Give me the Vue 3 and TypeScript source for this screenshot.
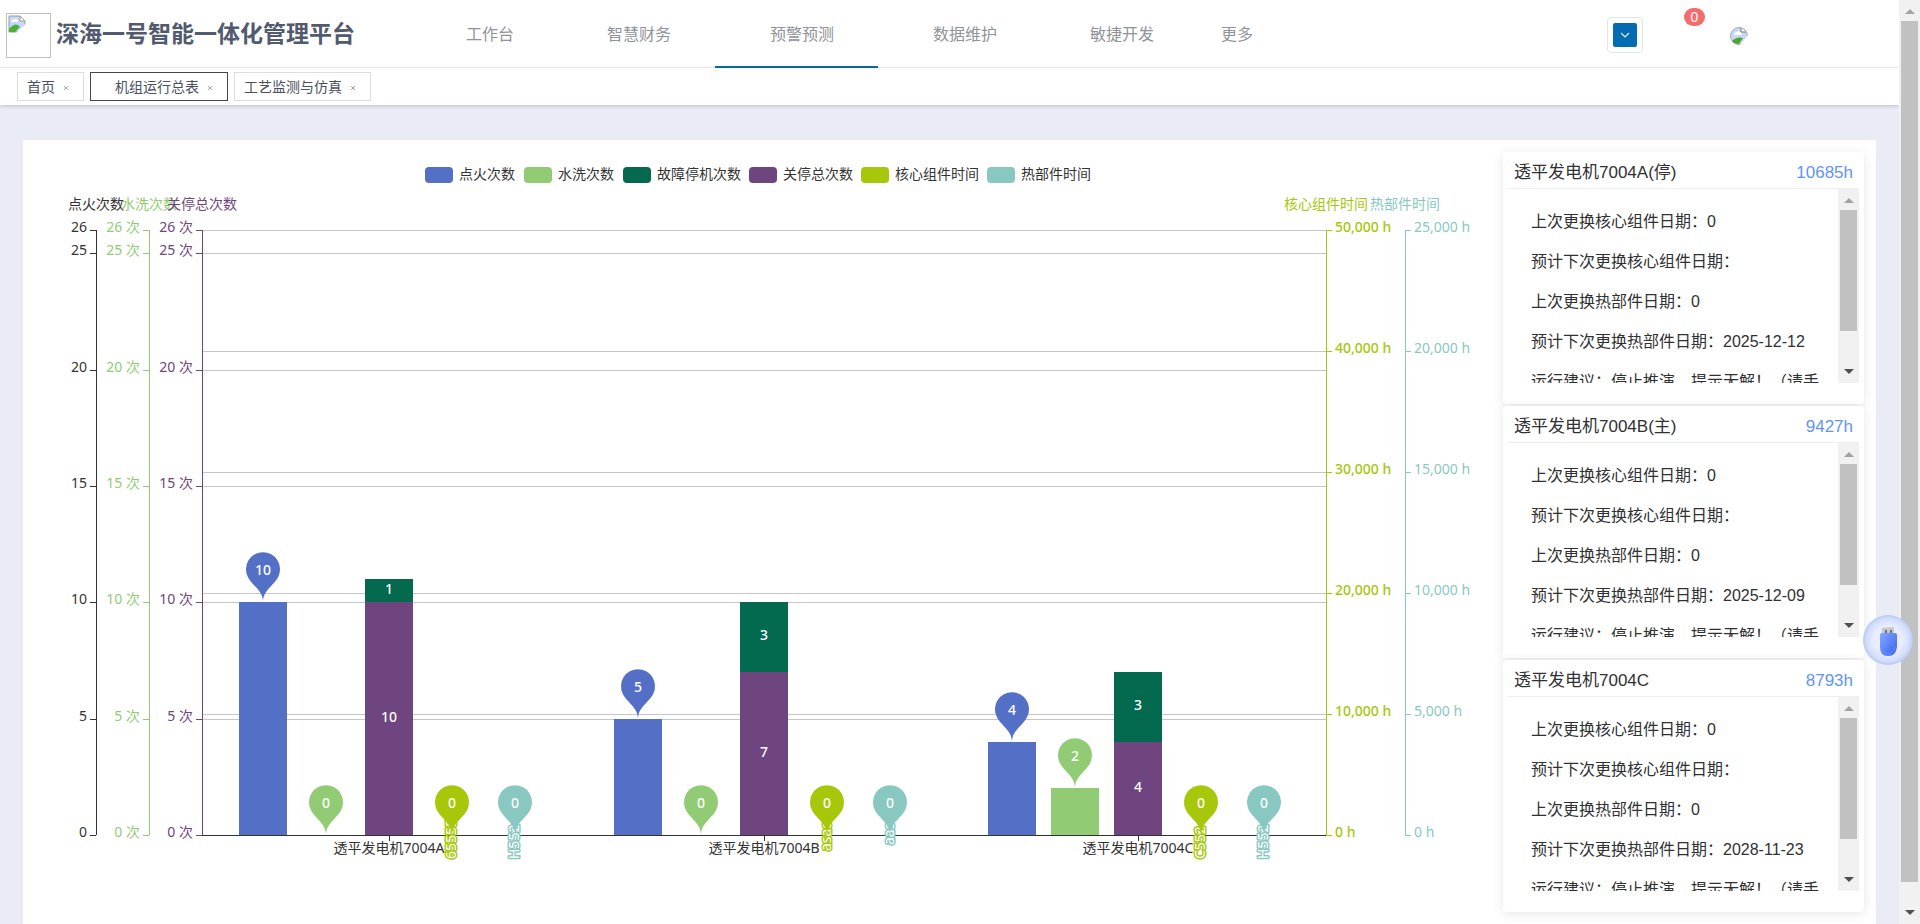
<script setup lang="ts">
import { ref } from 'vue'

interface Unit {
  name: string
  suffix: string
  hours: string
  lines: string[]
}

interface Group {
  label: string
  fire: number
  wash: number
  stop: number
  fault: number
  coreTag: string
  hotTag: string
}

const navItems = ['工作台', '智慧财务', '预警预测', '数据维护', '敏捷开发', '更多']
const activeNav = ref(2)

const tabs = ['首页', '机组运行总表', '工艺监测与仿真']
const activeTab = ref(1)

const advice = '运行建议：停止推演，提示无解！（请手'
const units: Unit[] = [
  {
    name: '透平发电机7004A',
    suffix: '(停)',
    hours: '10685h',
    lines: ['上次更换核心组件日期：0', '预计下次更换核心组件日期：', '上次更换热部件日期：0', '预计下次更换热部件日期：2025-12-12', advice],
  },
  {
    name: '透平发电机7004B',
    suffix: '(主)',
    hours: '9427h',
    lines: ['上次更换核心组件日期：0', '预计下次更换核心组件日期：', '上次更换热部件日期：0', '预计下次更换热部件日期：2025-12-09', advice],
  },
  {
    name: '透平发电机7004C',
    suffix: '',
    hours: '8793h',
    lines: ['上次更换核心组件日期：0', '预计下次更换核心组件日期：', '上次更换热部件日期：0', '预计下次更换热部件日期：2028-11-23', advice],
  },
]

const blue = '#5470c6'
const green = '#91cc75'
const pine = '#03694f'
const purple = '#6e457e'
const lime = '#a7c70a'
const teal = '#89c8c1'
const ink = '#333333'

const legend = [
  { x: 402, name: '点火次数', color: blue },
  { x: 501, name: '水洗次数', color: green },
  { x: 600, name: '故障停机次数', color: pine },
  { x: 726, name: '关停总次数', color: purple },
  { x: 838, name: '核心组件时间', color: lime },
  { x: 964, name: '热部件时间', color: teal },
]

const plot = { left: 179, right: 1303, top: 90, bottom: 695 }
const plotHeight = plot.bottom - plot.top
const countY = (v: number): number => Math.round(plot.bottom - (v / 26) * plotHeight)

const countTicks = [0, 5, 10, 15, 20, 25, 26]
const leftAxes = [
  { x: 73, name: '点火次数', unit: '', color: ink },
  { x: 126, name: '水洗次数', unit: ' 次', color: green },
  { x: 179, name: '关停总次数', unit: ' 次', color: purple },
]
const hourSteps = [0, 1, 2, 3, 4, 5]
const rightAxes = [
  { x: 1303, name: '核心组件时间', step: 10000, color: lime },
  { x: 1382, name: '热部件时间', step: 5000, color: teal },
]
const hourY = (i: number): number => plot.bottom - (i / 5) * plotHeight
const hourText = (v: number): string => v.toLocaleString('en-US') + ' h'

const groups: Group[] = [
  { label: '透平发电机7004A', fire: 10, wash: 0, stop: 10, fault: 1, coreTag: '65555', hotTag: 'H552' },
  { label: '透平发电机7004B', fire: 5, wash: 0, stop: 7, fault: 3, coreTag: 'asas', hotTag: 'aas' },
  { label: '透平发电机7004C', fire: 4, wash: 2, stop: 4, fault: 3, coreTag: 'C552', hotTag: 'H552' },
]
const barWidth = 48
const slot = 63
const groupX = (i: number): number => Math.floor(plot.left + ((plot.right - plot.left) / 3) * (i + 0.5))

const bars = groups.flatMap((g, i) => {
  const c = groupX(i)
  return [
    { x: c - 2 * slot, from: 0, to: g.fire, color: blue, label: '' },
    { x: c - slot, from: 0, to: g.wash, color: green, label: '' },
    { x: c, from: 0, to: g.stop, color: purple, label: String(g.stop) },
    { x: c, from: g.stop, to: g.stop + g.fault, color: pine, label: String(g.fault) },
  ].filter((b) => b.to > b.from)
})

const tags = groups.flatMap((g, i) => [
  { x: groupX(i) + slot, text: g.coreTag, color: lime, y: i === 1 ? 711 : 719 },
  { x: groupX(i) + 2 * slot, text: g.hotTag, color: teal, y: i === 1 ? 705 : 719 },
])

const pins = groups.flatMap((g, i) => {
  const c = groupX(i)
  return [
    { x: c - 2 * slot, y: countY(g.fire), text: g.fire, color: blue },
    { x: c - slot, y: countY(g.wash), text: g.wash, color: green },
    { x: c + slot, y: plot.bottom, text: 0, color: lime },
    { x: c + 2 * slot, y: plot.bottom, text: 0, color: teal },
  ]
})

// Teardrop marker: a circle whose lower arc flows into a point at (x, y).
function pinPath(x: number, y: number): string {
  const r = 17
  const h = 57
  const dy = (r * r) / (h - r)
  const cy = y - h + r + dy
  const angle = Math.asin(dy / r)
  const dx = Math.cos(angle) * r
  const tx = Math.sin(angle) * r * 0.6
  const ty = Math.cos(angle) * r * 0.6
  const tip = y - r * 0.7
  return `M${x - dx} ${cy + dy}A${r} ${r} 0 1 1 ${x + dx} ${cy + dy}C${x + dx - tx} ${cy + dy + ty} ${x} ${tip} ${x} ${y}C${x} ${tip} ${x - dx + tx} ${cy + dy + ty} ${x - dx} ${cy + dy}Z`
}
</script>

<template>
  <div class="shell">
    <div class="page">
      <header class="header">
        <div class="brand">
          <span class="logo">
            <svg class="broken" viewBox="0 0 18 18" role="img" aria-label="logo">
              <path d="M1 1h11l5 5v11H1z" fill="#c5d8f8" stroke="#9a9a9a" />
              <path d="M12 1v5h5z" fill="#fff" stroke="#9a9a9a" />
              <path d="M3 7q0-2 2-2 1-2 3-1 2 0 2 3z" fill="#fff" />
              <path d="M1 17v-3q5-6 9-4l2 2-5 5z" fill="#4caf37" />
              <path d="M18 8.500L8 18h10z" fill="#fff" />
            </svg>
          </span>
          <h1 class="title">深海一号智能一体化管理平台</h1>
        </div>
        <nav class="nav">
          <a v-for="(n, i) in navItems" :key="n" href="#" :class="['nav-item', { active: i === activeNav }]" @click.prevent="activeNav = i">{{ n }}</a>
        </nav>
        <div class="tools">
          <button class="picker" type="button" aria-label="展开">
            <span class="picker-face">
              <svg viewBox="0 0 10 10" width="10" height="10"><path d="M1 3l4 4 4-4" fill="none" stroke="#e6f2fb" stroke-width="1.200" /></svg>
            </span>
          </button>
          <span class="badge">0</span>
          <svg class="avatar" viewBox="0 0 18 18" role="img" aria-label="avatar">
            <circle cx="9" cy="9" r="8.500" fill="#c5d8f8" stroke="#a8a8ae" />
            <path d="M4 8q0-3 3-3 1-2 3 0 2 0 2 3z" fill="#fff" />
            <path d="M11 1v4h5" fill="#fff" stroke="#777" />
            <path d="M2 14q5-5 11-3l-4 6q-5 0-7-3z" fill="#4ca52f" />
            <path d="M18 8l-8 10h8z" fill="#fff" />
          </svg>
        </div>
      </header>

      <div class="tabs">
        <div v-for="(t, i) in tabs" :key="t" :class="['tab', { current: i === activeTab }]">
          <a href="#" class="tab-link" @click.prevent="activeTab = i">{{ t }}</a>
          <button class="tab-close" type="button" :aria-label="'关闭' + t">
            <svg viewBox="0 0 6 6" width="6" height="6"><path d="M1 1l4 4M5 1l-4 4" stroke="#8a8d93" stroke-width=".8" /></svg>
          </button>
        </div>
      </div>

      <main class="panel">
        <svg class="chart" viewBox="0 0 1480 784" role="img" aria-label="机组运行总表">
          <g v-for="l in legend" :key="l.name">
            <rect :x="l.x" y="27" width="28" height="16" rx="4" :fill="l.color" />
            <text :x="l.x + 34" y="39" :fill="ink">{{ l.name }}</text>
          </g>

          <g class="crisp" stroke="#c6c6c6">
            <line v-for="v in countTicks.slice(1)" :key="'c' + v" :x1="plot.left" :x2="plot.right" :y1="countY(v)" :y2="countY(v)" />
            <line v-for="i in hourSteps.slice(1)" :key="'h' + i" :x1="plot.left" :x2="plot.right" :y1="hourY(i)" :y2="hourY(i)" />
          </g>

          <g v-for="a in leftAxes" :key="a.name">
            <g class="crisp" :stroke="a.color">
              <line :x1="a.x" :x2="a.x" :y1="plot.top" :y2="plot.bottom" />
              <line v-for="v in countTicks" :key="v" :x1="a.x - 6" :x2="a.x" :y1="countY(v)" :y2="countY(v)" />
            </g>
            <text class="mid" :x="a.x" y="69" :fill="a.color">{{ a.name }}</text>
            <text v-for="v in countTicks" :key="v" class="end" :x="a.x - 9" :y="countY(v) + 2" :fill="a.color">{{ v }}{{ a.unit }}</text>
          </g>

          <g v-for="a in rightAxes" :key="a.name">
            <g class="crisp" :stroke="a.color">
              <line :x1="a.x" :x2="a.x" :y1="plot.top" :y2="plot.bottom" />
              <line v-for="i in hourSteps" :key="i" :x1="a.x" :x2="a.x + 6" :y1="hourY(i)" :y2="hourY(i)" />
            </g>
            <text class="mid" :x="a.x" y="69" :fill="a.color">{{ a.name }}</text>
            <text v-for="i in hourSteps" :key="i" :class="{ strong: a.color === lime }" :x="a.x + 9" :y="hourY(i) + 2" :fill="a.color">{{ hourText(i * a.step) }}</text>
          </g>

          <g v-for="(b, i) in bars" :key="'b' + i">
            <rect :x="b.x - barWidth / 2" :y="countY(b.to)" :width="barWidth" :height="countY(b.from) - countY(b.to)" :fill="b.color" />
            <text v-if="b.label" class="mid strong" :x="b.x" :y="(countY(b.from) + countY(b.to)) / 2 + 3" fill="#fff">{{ b.label }}</text>
          </g>

          <g class="crisp" :stroke="ink">
            <line :x1="plot.left" :x2="plot.right" :y1="plot.bottom" :y2="plot.bottom" />
            <line v-for="(g, i) in groups" :key="g.label" :x1="groupX(i)" :x2="groupX(i)" :y1="plot.bottom" :y2="plot.bottom + 6" />
          </g>
          <text v-for="(g, i) in groups" :key="g.label" class="mid" :x="groupX(i)" :y="plot.bottom + 18" :fill="ink">{{ g.label }}</text>

          <text v-for="(t, i) in tags" :key="'t' + i" class="tag" :transform="`translate(${t.x + 4} ${t.y}) rotate(-90)`" :stroke="t.color">{{ t.text }}</text>

          <g v-for="(p, i) in pins" :key="'p' + i">
            <path :d="pinPath(p.x, p.y)" :fill="p.color" />
            <text class="mid strong" :x="p.x" :y="p.y - 27" fill="#fff">{{ p.text }}</text>
          </g>
        </svg>

        <aside class="side">
          <section v-for="u in units" :key="u.name" class="card">
            <div class="card-head">
              <h2 class="card-title">{{ u.name }}{{ u.suffix }}</h2>
              <span class="hours">{{ u.hours }}</span>
            </div>
            <div class="card-body">
              <div class="lines">
                <p v-for="l in u.lines" :key="l">{{ l }}</p>
              </div>
              <div class="bar">
                <i class="arrow up"></i>
                <i class="thumb"></i>
                <i class="arrow down"></i>
              </div>
            </div>
          </section>
        </aside>
      </main>
    </div>

    <div class="bar page-bar">
      <i class="arrow up"></i>
      <i class="thumb"></i>
      <i class="arrow down"></i>
    </div>

    <button class="float" type="button" aria-label="USB">
      <svg viewBox="0 0 50 50" width="50" height="50">
        <defs>
          <radialGradient id="halo"><stop offset=".55" stop-color="#e9eeff" /><stop offset=".85" stop-color="#d3ddfb" /><stop offset="1" stop-color="#b7c9f8" /></radialGradient>
          <linearGradient id="stick" x1="0" y1="0" x2="1" y2="1"><stop offset="0" stop-color="#86a6ff" /><stop offset="1" stop-color="#3563f2" /></linearGradient>
        </defs>
        <circle cx="25" cy="25" r="25" fill="url(#halo)" />
        <path d="M19 13l12-1v9H19z" fill="#c4c8d2" />
        <path d="M22 15h2v3h-2zM27 15h2v3h-2z" fill="#70747e" />
        <path d="M17 20q0-2 2-2h13q2 0 2 2v12q-1 9-9 9t-8-9z" fill="url(#stick)" />
        <path d="M19 32q1 7 6 7t7-7" fill="none" stroke="#6e91ff" />
      </svg>
    </button>
  </div>
</template>

<style>
body {
  margin: 0;
  overflow: hidden;
}
</style>

<style scoped>
* {
  box-sizing: border-box;
}

.shell {
  position: relative;
  display: flex;
  height: 100vh;
  overflow: hidden;
  background: #eaecf5;
  font-family: "Liberation Sans", "Noto Sans CJK SC", sans-serif;
  color: #303133;
}

.page {
  flex: 1;
  min-width: 0;
}

.header {
  display: flex;
  height: 68px;
  background: #fff;
  border-bottom: 1px solid #f3f3f5;
}

.brand {
  display: flex;
  align-items: center;
  gap: 5px;
  width: 411px;
  padding: 3px 0 0 6px;
}

.logo {
  width: 45px;
  height: 45px;
  padding: 1px;
  border: 1px solid #c0c0c0;
}

.broken {
  display: block;
  width: 18px;
  height: 18px;
}

.title {
  margin: 0 0 3px;
  font-size: 23px;
  line-height: 32px;
  font-weight: 700;
  color: #515a6e;
  white-space: nowrap;
}

.nav {
  display: flex;
  flex: 1;
}

.nav-item {
  height: 68px;
  padding: 2px 44px 0 55px;
  border-bottom: 2px solid transparent;
  font-size: 16px;
  line-height: 66px;
  color: #909399;
  text-decoration: none;
  white-space: nowrap;
}

.nav-item:first-child {
  padding-right: 38px;
}

.nav-item:nth-child(n + 5) {
  padding-left: 49px;
}

.nav-item:nth-child(5) {
  padding-right: 18px;
}

.nav-item.active {
  border-bottom-color: #0a67a3;
}

.tools {
  display: flex;
  align-items: flex-start;
  padding-right: 151px;
}

.picker {
  width: 36px;
  height: 36px;
  margin-top: 17px;
  padding: 5px;
  border: 1px solid #e2e4ea;
  border-radius: 4px;
  background: #fff;
}

.picker-face {
  display: flex;
  align-items: center;
  justify-content: center;
  height: 24px;
  border-radius: 2px;
  background: #036bb3;
}

.badge {
  width: 21px;
  height: 18px;
  margin: 8px 25px 0 41px;
  border-radius: 9px;
  background: #f56c6c;
  color: #fff;
  font-size: 14px;
  line-height: 18px;
  text-align: center;
}

.avatar {
  width: 18px;
  height: 18px;
  margin-top: 27px;
}

.tabs {
  display: flex;
  gap: 6px;
  height: 37px;
  padding: 4px 17px;
  background: #fff;
  box-shadow: 0 1px 4px rgba(0, 21, 41, 0.2);
}

.tab {
  display: flex;
  align-items: center;
  gap: 8px;
  height: 29px;
  padding: 0 14px 0 9px;
  border: 1px solid #d8dce5;
  background: #fff;
}

.tab.current {
  padding-left: 24px;
  border-color: #42464e;
}

.tab-link {
  font-size: 14px;
  line-height: 20px;
  color: #495060;
  text-decoration: none;
}

.tab-close {
  display: flex;
  margin-top: 3px;
  padding: 0;
  border: 0;
  background: none;
}

.panel {
  display: flex;
  align-items: flex-start;
  min-height: 800px;
  margin: 35px 23px 0;
  padding-right: 12px;
  background: #fff;
}

.chart {
  flex: 1;
  display: block;
  min-width: 0;
  height: auto;
  font-family: "Noto Sans", "Noto Sans CJK SC", sans-serif;
  font-size: 14px;
}

.crisp {
  shape-rendering: crispEdges;
}

.mid {
  text-anchor: middle;
}

.end {
  text-anchor: end;
}

.strong {
  font-weight: 500;
}

.tag {
  fill: #fff;
  stroke-width: 3px;
  stroke-linejoin: round;
  paint-order: stroke;
}

.side {
  display: flex;
  flex-direction: column;
  gap: 2px;
  width: 361px;
  padding-top: 12px;
}

.card {
  height: 252px;
  padding: 0 5px;
  border-radius: 4px;
  background: #fff;
  box-shadow: 0 2px 12px rgba(0, 0, 0, 0.1);
}

.card-head {
  display: flex;
  align-items: center;
  justify-content: space-between;
  height: 37px;
  padding: 6px 6px 0;
  border-bottom: 1px solid #ebeef5;
}

.card-title {
  margin: 0;
  font-size: 17px;
  line-height: 24px;
  font-weight: 400;
}

.hours {
  font-size: 17px;
  line-height: 24px;
  color: #6394f0;
}

.card-body {
  display: flex;
  height: 194px;
  overflow: hidden;
}

.lines {
  flex: 1;
  min-width: 0;
  padding: 13px 0 0 23px;
}

.lines p {
  margin: 0;
  font-size: 16px;
  line-height: 40px;
  white-space: nowrap;
}

.bar {
  display: flex;
  flex-direction: column;
  width: 21px;
  padding: 0 2px;
  background: #f1f1f1;
}

.thumb {
  height: 121px;
  background: #c1c1c1;
}

.arrow {
  display: flex;
  align-items: center;
  justify-content: center;
  height: 21px;
}

.arrow::before {
  content: "";
  border: 5px solid transparent;
}

.arrow.up::before {
  margin-top: 2px;
  border-top: 0;
  border-bottom-color: #a3a3a3;
}

.arrow.down {
  margin-top: auto;
}

.arrow.down::before {
  margin-bottom: 2px;
  border-bottom: 0;
  border-top-color: #505050;
}

.page-bar .thumb {
  flex: 1;
}

.page-bar .arrow.down {
  height: 42px;
  padding-top: 20px;
}

.float {
  position: absolute;
  top: 615px;
  right: 7px;
  width: 50px;
  height: 50px;
  padding: 0;
  border: 0;
  border-radius: 25px;
  background: none;
}
</style>
